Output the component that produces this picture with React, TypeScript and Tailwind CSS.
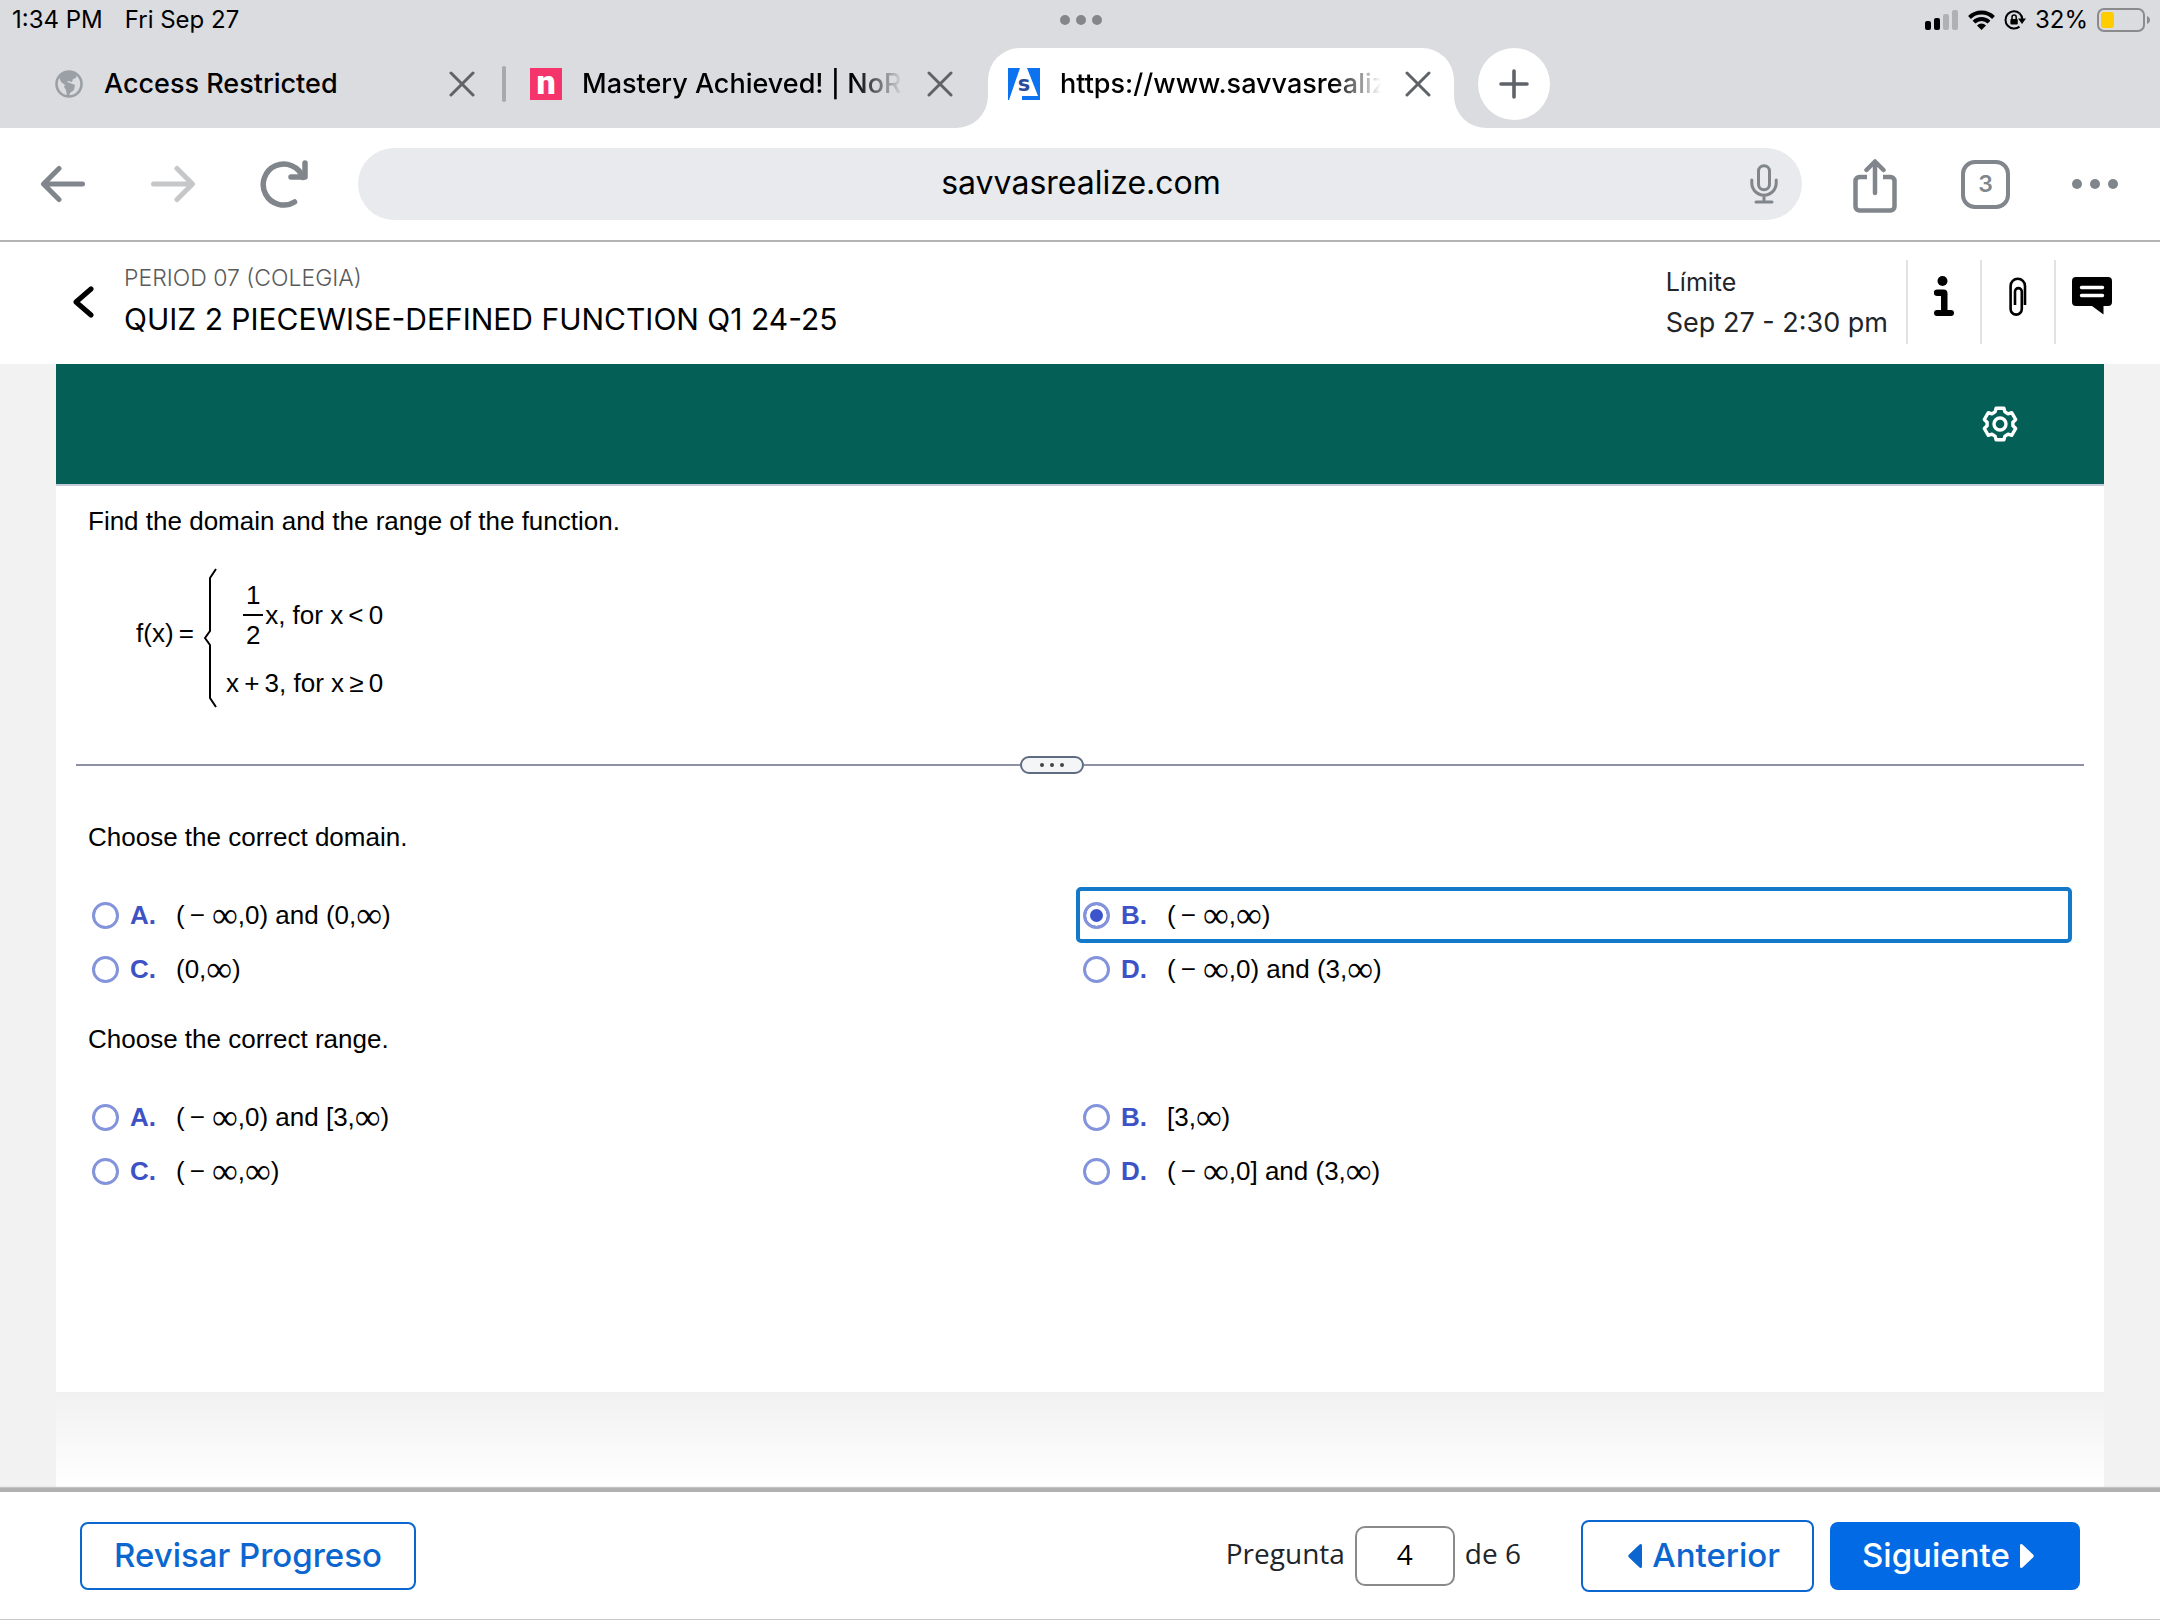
import { useState } from 'react';

const ARIAL = "font-['Liberation_Sans',Arial,sans-serif]";

const domainOptions = [
  { letter: 'A', text: '(− ∞,0) and (0,∞)' },
  { letter: 'B', text: '(− ∞,∞)' },
  { letter: 'C', text: '(0,∞)' },
  { letter: 'D', text: '(− ∞,0) and (3,∞)' }
];

const rangeOptions = [
  { letter: 'A', text: '(− ∞,0) and [3,∞)' },
  { letter: 'B', text: '[3,∞)' },
  { letter: 'C', text: '(− ∞,∞)' },
  { letter: 'D', text: '(− ∞,0] and (3,∞)' }
];

function CloseIcon() {
  return (
    <svg width="26" height="26" viewBox="0 0 26 26" fill="none" stroke="#5f6368" strokeWidth="3" strokeLinecap="round">
      <path d="M2 2 24 24M24 2 2 24" />
    </svg>
  );
}

function StatusBar() {
  return (
    <div className="grid grid-cols-3 items-center h-10 pl-3 pr-[10px] text-[24px] leading-6 text-black">
      <div className="flex gap-[22px]">
        <span>1:34 PM</span>
        <span>Fri Sep 27</span>
      </div>
      <div className="flex justify-center gap-[6px]">
        <span className="size-[10px] rounded-full bg-[#86868a]" />
        <span className="size-[10px] rounded-full bg-[#86868a]" />
        <span className="size-[10px] rounded-full bg-[#86868a]" />
      </div>
      <div className="flex items-center justify-end gap-[9px]">
        <svg width="34" height="20" viewBox="0 0 34 20">
          <rect x="0" y="11" width="6" height="9" rx="2" />
          <rect x="9" y="8" width="6" height="12" rx="2" />
          <rect x="18" y="4" width="6" height="16" rx="2" fill="#b1b1b4" />
          <rect x="27" y="0" width="6" height="20" rx="2" fill="#b1b1b4" />
        </svg>
        <svg width="27" height="20" viewBox="0 0 27 20" fill="none" stroke="#000" strokeWidth="4">
          <path d="M1.5 7.5a17 17 0 0 1 24 0" />
          <path d="M6 12.2a10.6 10.6 0 0 1 15 0" />
          <path d="M13.5 20 9 15.4a6.4 6.4 0 0 1 9 0Z" fill="#000" stroke="none" />
        </svg>
        <svg width="22" height="20" viewBox="0 0 22 20" fill="none" stroke="#000" strokeWidth="2">
          <path d="M15.5 3.2A8.6 8.6 0 1 0 15.5 16.6" />
          <path d="M15.5 3.2a8.6 8.6 0 0 1 2.8 6" />
          <path d="M14 8.6h8l-4 5.4Z" fill="#000" stroke="none" />
          <rect x="6.4" y="9" width="7.4" height="5.6" rx="1" fill="#000" stroke="none" />
          <path d="M8 9V7.2a2.1 2.1 0 0 1 4.2 0V9" strokeWidth="1.5" />
        </svg>
        <span>32%</span>
        <svg width="53" height="24" viewBox="0 0 53 24">
          <rect x="1" y="1" width="46" height="22" rx="6" fill="none" stroke="#8b8b8f" strokeWidth="2" />
          <rect x="4" y="4" width="13" height="16" rx="3" fill="#ffcc00" />
          <path d="M50 8c4 1.400 4 6.600 0 8Z" fill="#8b8b8f" />
        </svg>
      </div>
    </div>
  );
}

function TabStrip() {
  return (
    <div className="flex h-[88px] text-[27px] leading-8 font-medium text-black">
      <div className="flex items-center w-[502px] h-[88px] pl-[55px] pr-[27px]">
        <svg width="28" height="28" viewBox="0 0 28 28">
          <circle cx="14" cy="14" r="12.500" fill="none" stroke="#9aa0a6" strokeWidth="2.600" />
          <path
            d="M5 6C9 1 18 0 22 4l-1 4-3 1-1 3-4-1-1 1 3 1 5 2-1 5-4 3-1 4-2-1-1-6-2-3 1-2-4-3-2-5Z"
            fill="#9aa0a6"
          />
        </svg>
        <span className="flex-1 pl-[21px]">Access Restricted</span>
        <button aria-label="Close tab"><CloseIcon /></button>
      </div>

      <div className="flex items-center w-[486px] h-[88px] pr-[35px]">
        <span className="w-1 h-9 rounded bg-[#a8a9ac]" />
        <span className="flex items-center justify-center size-8 ml-6 bg-[#f5346c] text-white font-['Liberation_Sans_Narrow','Roboto',sans-serif] font-black text-[34px] leading-8 pb-1">
          n
        </span>
        <span className="flex-1 min-w-0 ml-5 whitespace-nowrap [mask-image:linear-gradient(to_right,black_85%,transparent)]">
          Mastery Achieved! | NoR
        </span>
        <button aria-label="Close tab" className="ml-6"><CloseIcon /></button>
      </div>

      <div className="relative flex items-center w-[466px] h-20 mt-2 pl-5 pr-[23px] pb-2 rounded-t-[32px] bg-white">
        <svg className="absolute bottom-0 -left-8" width="32" height="32" viewBox="0 0 32 32">
          <path d="M32 0v32H0A32 32 0 0 0 32 0Z" fill="#fff" />
        </svg>
        <svg className="absolute bottom-0 -right-8" width="32" height="32" viewBox="0 0 32 32">
          <path d="M0 0v32h32A32 32 0 0 1 0 0Z" fill="#fff" />
        </svg>
        <span className="relative flex items-center justify-center size-8 text-[#2b4a9b] font-['DejaVu_Sans',sans-serif] font-bold text-[21px] leading-8">
          <svg className="absolute inset-0" width="32" height="32" viewBox="0 0 32 32">
            <path d="M0 0H12L1 32H0ZM19 0H32V32H14V28H30Z" fill="#0b73ef" />
          </svg>
          <span className="relative">s</span>
        </span>
        <span className="flex-1 min-w-0 ml-5 whitespace-nowrap [mask-image:linear-gradient(to_right,black_85%,transparent)]">
          https://www.savvasrealiz
        </span>
        <button aria-label="Close tab" className="ml-6"><CloseIcon /></button>
      </div>

      <button aria-label="New tab" className="flex items-center justify-center size-[72px] mt-2 ml-6 rounded-full bg-white">
        <svg width="30" height="30" viewBox="0 0 30 30" stroke="#5f6368" strokeWidth="3.600" strokeLinecap="round">
          <path d="M15 2v26M2 15h26" />
        </svg>
      </button>
    </div>
  );
}

function Toolbar() {
  return (
    <div className="flex items-center h-[114px] pl-10 pr-[42px] bg-white border-b-2 border-[#b4b4b6]">
      <button aria-label="Back">
        <svg width="46" height="40" viewBox="0 0 46 40" fill="none" stroke="#80868b" strokeWidth="5" strokeLinecap="round" strokeLinejoin="round">
          <path d="M42.500 20H4M19 4.500 3.500 20 19 35.500" />
        </svg>
      </button>
      <button aria-label="Forward" className="ml-16">
        <svg width="46" height="40" viewBox="0 0 46 40" fill="none" stroke="#c6c7c9" strokeWidth="5" strokeLinecap="round" strokeLinejoin="round">
          <path d="M3.500 20H42M27 4.500 42.500 20 27 35.500" />
        </svg>
      </button>
      <button aria-label="Reload" className="ml-16">
        <svg width="48" height="48" viewBox="0 0 48 48" fill="none" stroke="#80868b" strokeWidth="5.500" strokeLinecap="round" strokeLinejoin="round">
          <path d="M34.500 42A20.500 20.500 0 1 1 43 17.500" />
          <path d="M45 3V17H31" />
        </svg>
      </button>
      <div className="flex items-center flex-1 h-[72px] ml-[50px] pr-6 rounded-full bg-[#e8eaed]">
        <input
          aria-label="Address"
          className="flex-1 min-w-0 pl-[54px] pb-0.5 text-center text-[32px] leading-10 text-black outline-none"
          defaultValue="savvasrealize.com"
        />
        <button aria-label="Voice search">
          <svg width="28" height="40" viewBox="0 0 28 40" fill="none" stroke="#80868b" strokeWidth="3" strokeLinecap="round">
            <rect x="8.500" y="1.800" width="11" height="24" rx="5.500" />
            <path d="M1.800 16v3a12.200 12.200 0 0 0 24.400 0v-3M14 31v6M6 38h16" />
          </svg>
        </button>
      </div>
      <button aria-label="Share" className="ml-[51px] pt-1">
        <svg width="44" height="54" viewBox="0 0 44 54" fill="none" stroke="#80868b" strokeWidth="4.500" strokeLinecap="round" strokeLinejoin="round">
          <path d="M14 18H6.500a4 4 0 0 0-4 4v25.500a4 4 0 0 0 4 4h31a4 4 0 0 0 4-4V22a4 4 0 0 0-4-4H30" strokeLinecap="butt" />
          <path d="M22 34V3.500M13.500 11 22 2.500 30.500 11" />
        </svg>
      </button>
      <button aria-label="Tabs" className="flex items-center justify-center size-[49px] ml-16 rounded-[14px] border-4 border-[#80868b] text-[#80868b] text-[23px] font-semibold">
        3
      </button>
      <button aria-label="More" className="flex gap-2 ml-[62px]">
        <span className="size-[10px] rounded-full bg-[#80868b]" />
        <span className="size-[10px] rounded-full bg-[#80868b]" />
        <span className="size-[10px] rounded-full bg-[#80868b]" />
      </button>
    </div>
  );
}

function QuizHeader() {
  return (
    <header className="flex items-start h-[122px] pt-[18px] pl-[72px] pr-12 bg-white">
      <button aria-label="Volver" className="mt-[26px]">
        <svg width="22" height="32" viewBox="0 0 22 32" fill="none" stroke="#000" strokeWidth="5" strokeLinecap="round" strokeLinejoin="round">
          <path d="M19 3 4 16l15 13" />
        </svg>
      </button>
      <div className="flex-1 ml-[30px]">
        <p className="text-[23px] leading-9 text-[#5a5a5a] font-light">PERIOD 07 (COLEGIA)</p>
        <h1 className="text-[30px] leading-[46px] text-black">QUIZ 2 PIECEWISE-DEFINED FUNCTION Q1 24-25</h1>
      </div>
      <div className="pt-1 text-[#212529]">
        <p className="text-[25px] leading-9">Límite</p>
        <p className="text-[27px] leading-[46px]">Sep 27 - 2:30 pm</p>
      </div>
      <div className="flex h-[84px] ml-[18px]">
        <button aria-label="Información" className="flex justify-center w-[74px] pt-4 border-l-2 border-[#e2e2e2]">
          <svg width="20" height="40" viewBox="0 0 20 40">
            <circle cx="8.500" cy="5" r="5" />
            <path d="M3 13.500h6.500a4 4 0 0 1 4 4V34H17a3 3 0 0 1 0 6H3a3 3 0 0 1 0-6h4V20H3a3.200 3.200 0 0 1 0-6.500Z" />
          </svg>
        </button>
        <button aria-label="Adjuntos" className="flex justify-center w-[74px] pt-[17px] border-l-2 border-[#e2e2e2]">
          <svg width="18" height="40" viewBox="0 0 18 40" fill="none" stroke="#000" strokeWidth="2.600">
            <path d="M16 28V9a7.200 7.200 0 0 0-14.400 0v23a5.600 5.600 0 0 0 11.200 0V14.500a3.400 3.400 0 0 0-6.800 0V28" />
          </svg>
        </button>
        <button aria-label="Comentarios" className="flex pl-4 pt-[17px] border-l-2 border-[#e2e2e2]">
          <svg width="40" height="38" viewBox="0 0 40 38">
            <path d="M4 0h32a4 4 0 0 1 4 4v21a4 4 0 0 1-4 4H31.500v8.500L20 29H4a4 4 0 0 1-4-4V4a4 4 0 0 1 4-4Z" />
            <path d="M9.500 10.500h21M9.500 18.500h21" stroke="#fff" strokeWidth="3.400" strokeLinecap="round" />
          </svg>
        </button>
      </div>
    </header>
  );
}

function PiecewiseFunction() {
  return (
    <div className="flex items-center h-[140px] ml-12 text-[26px] leading-[30px]">
      <span className="w-[68px] mb-[10px] whitespace-nowrap">f(x)&#8201;=</span>
      <svg width="14" height="140" viewBox="0 0 14 140" fill="none" stroke="#000" strokeWidth="2">
        <path d="M12 1 6 10V63L1 70 6 77V130L12 139" />
      </svg>
      <div className="flex flex-col items-end ml-2 gap-[14px] pb-[3px]">
        <div className="flex items-center">
          <span className="flex flex-col items-center w-5 leading-[38px]">
            <span>1</span>
            <span className="w-5 h-0.5 bg-black" />
            <span>2</span>
          </span>
          <span className="ml-0.5">x, for x&#8201;&lt;&#8201;0</span>
        </div>
        <span>x&#8201;+&#8201;3, for x&#8201;≥&#8201;0</span>
      </div>
    </div>
  );
}

function Choices({ name, legend, options, value, onChange }) {
  return (
    <fieldset>
      <legend className="pl-0.5 text-[26px] leading-[30px]">{legend}</legend>
      <div className="grid grid-cols-[991fr_994fr] pt-9">
        {options.map((o) => (
          <label
            key={o.letter}
            className={`flex items-center h-[54px] pl-1.5 text-[26px] leading-[30px] ${value === o.letter ? 'rounded outline-[4px] outline-offset-[-3px] outline-[#1479c9]' : ''}`}
          >
            <input
              type="radio"
              name={name}
              checked={value === o.letter}
              onChange={() => onChange(o.letter)}
              className="appearance-none size-[27px] rounded-full border-[3px] border-[#8494dc] bg-white checked:bg-[#3d55cc] checked:shadow-[inset_0_0_0_4px_white]"
            />
            <span className="w-[46px] ml-[11px] font-bold text-[#3d52c4]">{o.letter}.</span>
            <span>
              {o.text.split(/([∞−])/).map((part, i) =>
                part === '∞' ? (
                  <span key={i} className="font-['Liberation_Serif',serif] text-[36px] leading-0 align-[-3px]">∞</span>
                ) : part === '−' ? (
                  <span key={i} className="ml-[5px]">−</span>
                ) : (
                  part
                )
              )}
            </span>
          </label>
        ))}
      </div>
    </fieldset>
  );
}

function Footer() {
  const [page, setPage] = useState('4');

  return (
    <footer className="relative flex items-center h-[132px] px-20 bg-white border-t-4 border-b border-t-[#b0b0b0] border-b-[#c8c8c8] shadow-[0_-1px_1px_#c4c4c4] text-[33px] font-medium">
      <button className="h-[68px] w-[336px] rounded-lg border-2 border-[#0c66d0] text-[#0c66d0]">Revisar Progreso</button>
      <div className="flex items-center ml-auto font-['Open_Sans',sans-serif] font-normal text-[28px] text-[#212529]">
        <label htmlFor="page" className="pb-1.5">Pregunta</label>
        <input
          id="page"
          className="w-[100px] h-[60px] mx-[10px] pb-1 rounded-[10px] border-2 border-[#8a8a8a] text-center text-black"
          value={page}
          onChange={(e) => setPage(e.target.value)}
        />
        <span className="pb-1.5">de 6</span>
      </div>
      <button className="flex items-center justify-end gap-[10px] h-[72px] w-[233px] ml-[60px] pr-8 rounded-lg border-2 border-[#0c66d0] text-[#0c66d0]">
        <svg width="14" height="24" viewBox="0 0 14 24" fill="currentColor">
          <path d="M14 1v22q-1 2-3 0L1 13.500q-1.500-1.500 0-3L11 1q2-2 3 0Z" />
        </svg>
        Anterior
      </button>
      <button className="flex items-center gap-[10px] h-[68px] w-[250px] ml-4 pl-8 rounded-lg bg-[#026ae4] text-white">
        Siguiente
        <svg width="14" height="24" viewBox="0 0 14 24" fill="currentColor">
          <path d="M0 1v22q1 2 3 0l10-9.500q1.500-1.500 0-3L3 1q-2-2-3 0Z" />
        </svg>
      </button>
    </footer>
  );
}

function App() {
  const [domain, setDomain] = useState('B');
  const [range, setRange] = useState('');

  return (
    <div className="flex flex-col min-h-screen bg-[#f2f2f2] font-['Inter',sans-serif]">
      <div className="bg-[#dbdce0]">
        <StatusBar />
        <TabStrip />
      </div>
      <Toolbar />
      <QuizHeader />

      <main className="flex flex-col flex-1 mx-14">
        <div className="flex items-center justify-end h-[122px] pr-[86px] bg-[#046056] border-b-2 border-[#c5cbd8]">
          <button aria-label="Ajustes">
            <svg width="36" height="36" viewBox="0 0 36 36" fill="none" stroke="#fff" strokeWidth="3.400" strokeLinejoin="round">
              <path d="M14.100 2.200H21.900L22.900 5.900 26 7.800 29.700 6.700 33.700 13.500 30.900 16.200V19.800L33.700 22.500 29.700 29.300 26 28.200 22.900 30.100 21.900 33.800H14.100L13.100 30.100 10 28.200 6.300 29.300 2.300 22.500 5.100 19.800V16.200L2.300 13.500 6.300 6.700 10 7.800 13.100 5.900Z" />
              <circle cx="18" cy="18" r="6" />
            </svg>
          </button>
        </div>

        <div className={`flex-1 pt-5 px-5 bg-white text-black ${ARIAL}`}>
          <p className="pl-3 text-[26px] leading-[30px]">Find the domain and the range of the function.</p>
          <div className="pt-8 pl-3"><PiecewiseFunction /></div>

          <div className="flex items-center h-[18px] mt-12">
            <div className="h-0.5 w-[944px] bg-[#8d91a6]" />
            <button aria-label="Resize" className="flex items-center justify-center gap-[6px] w-16 h-[18px] rounded-[9px] border-2 border-[#5f6b80] bg-[#f3f5f7]">
              <span className="size-1 rounded-full bg-[#444]" />
              <span className="size-1 rounded-full bg-[#444]" />
              <span className="size-1 rounded-full bg-[#444]" />
            </button>
            <div className="flex-1 h-0.5 bg-[#8d91a6]" />
          </div>

          <div className="flex flex-col gap-7 pt-12 pl-[10px] pr-[13px]">
            <Choices name="domain" legend="Choose the correct domain." options={domainOptions} value={domain} onChange={setDomain} />
            <Choices name="range" legend="Choose the correct range." options={rangeOptions} value={range} onChange={setRange} />
          </div>
        </div>
        <div className="h-24 bg-linear-to-b from-[#f1f1f1] to-white" />
      </main>

      <Footer />
    </div>
  );
}

export default App;
